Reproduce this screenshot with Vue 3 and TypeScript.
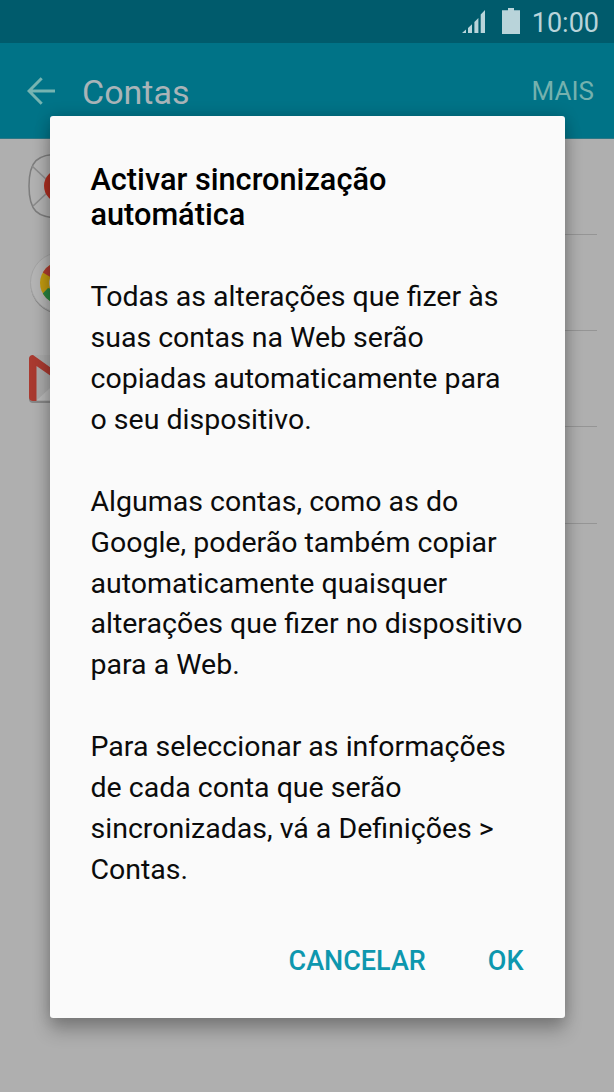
<script setup lang="ts">
const title: string[] = ['Activar sincronização', 'automática']

const paragraphs: string[][] = [
  ['Todas as alterações que fizer às', 'suas contas na Web serão', 'copiadas automaticamente para', 'o seu dispositivo.'],
  ['Algumas contas, como as do', 'Google, poderão também copiar', 'automaticamente quaisquer', 'alterações que fizer no dispositivo', 'para a Web.'],
  ['Para seleccionar as informações', 'de cada conta que serão', 'sincronizadas, vá a Definições >', 'Contas.'],
]
</script>

<template>
  <div class="screen">
    <header class="status">
      <svg class="signal" width="24" height="24" viewBox="0 0 24 24">
        <path d="M0 24 4 20.5V24ZM6 19 10 15.3V24H6ZM12.4 13 16.4 9V24h-4ZM18.7 5.5 23 1V24h-4.3Z" />
      </svg>
      <svg class="battery" width="18" height="26" viewBox="0 0 18 26">
        <path d="M6 0h6v2.3h6V26H0V2.3h6Z" />
      </svg>
      <span class="time">10:00</span>
    </header>
    <nav class="bar">
      <svg class="back" width="28" height="28" viewBox="0 0 28 28">
        <path d="M28 14H2M14.7 1.3 2 14l12.7 12.7" />
      </svg>
      <h1 class="heading">Contas</h1>
      <span class="more">MAIS</span>
    </nav>
    <main class="list">
      <div class="row">
        <svg class="icon" width="66" height="66" viewBox="0 0 66 66">
          <path d="M1 32C1 7 9 0 33 0S65 7 65 32 57 64 33 64 1 57 1 32Z" fill="#b1b1b1" stroke="#7d7d7d" stroke-width="1.5" />
          <path d="M4 12 19 26M5 52 19 39" stroke="#8b8b8b" stroke-width="1.7" />
          <circle cx="33" cy="32" r="17" fill="#ad2e20" />
        </svg>
      </div>
      <div class="row">
        <svg class="icon" width="66" height="66" viewBox="0 0 66 66">
          <circle cx="32.5" cy="34" r="30" fill="#858585" />
          <circle cx="32.5" cy="32.5" r="30" fill="#b4b4b4" stroke="#a3a3a3" />
          <circle cx="33" cy="33" r="21" fill="#c19a10" />
          <path d="M14.8 22.5A21 21 0 0 1 51.2 22.5H33L24 28Z" fill="#ae3b31" />
          <path d="M14.8 43.5A21 21 0 0 0 33 54V42L20 38Z" fill="#28833f" />
          <circle cx="33" cy="33" r="12" fill="#b9b9b9" />
        </svg>
      </div>
      <div class="row">
        <svg class="icon" width="66" height="66" viewBox="0 0 66 66">
          <rect x="1" y="10" width="64" height="47" rx="4" fill="#868686" />
          <rect x="2" y="9" width="62" height="46" rx="3" fill="#a9a9a9" />
          <path d="M9 54 33 32 57 54Z" fill="#b8b8b8" />
          <path d="M1 13Q1 9 5 9L33 29 61 9Q65 9 65 13V55H58V19L33 37 8.5 20V55H5Q1 55 1 51Z" fill="#a93a30" />
        </svg>
      </div>
      <div class="row"></div>
    </main>

    <section class="dialog" role="dialog">
      <h2 class="title"><span v-for="line in title" :key="line" class="line">{{ line }}</span></h2>
      <div class="body">
        <p v-for="(lines, i) in paragraphs" :key="i" class="para">
          <span v-for="line in lines" :key="line" class="line">{{ line }}</span>
        </p>
      </div>
      <div class="actions">
        <button class="action">CANCELAR</button>
        <button class="action">OK</button>
      </div>
    </section>
  </div>
</template>

<style>
body {
  margin: 0;
}
</style>

<style scoped>
.screen {
  position: relative;
  width: 614px;
  height: 1092px;
  overflow: hidden;
  background: #afafaf;
  font-family: Roboto, sans-serif;
}
.status {
  box-sizing: border-box;
  height: 43px;
  display: flex;
  align-items: flex-start;
  padding: 8px 15px 0 0;
  justify-content: flex-end;
  background: #005b6c;
  color: #b9d4da;
}
.status svg {
  fill: currentColor;
}
.signal {
  margin: 1px 16px 0 0;
}
.battery {
  margin-right: 12px;
}
.time {
  margin-top: 1px;
  font-size: 27px;
  line-height: 28px;
}
.bar {
  box-sizing: border-box;
  height: 95.5px;
  display: flex;
  align-items: center;
  padding: 1px 20px 0 27px;
  background: #007387;
  border-bottom: 1px solid #2c7785;
}
.back {
  fill: none;
  stroke: #76b4b1;
  stroke-width: 3;
}
.heading {
  margin: 2px 0 0 27px;
  font-size: 34px;
  font-weight: 400;
  line-height: 40px;
  color: #a9b4b8;
}
.more {
  margin: 0 0 0 auto;
  font-size: 26px;
  line-height: 30px;
  color: #75b1ae;
}
.list {
  padding: 0 17px 0 120px;
}
.row {
  box-sizing: border-box;
  height: 96.3px;
  padding-top: 15px;
  border-bottom: 1px solid #959595;
}
.icon {
  display: block;
  margin-left: -92px;
  overflow: visible;
}
.dialog {
  position: absolute;
  left: 49.5px;
  top: 116px;
  box-sizing: border-box;
  width: 515px;
  height: 902px;
  padding: 46px 41px 0;
  background: #fafafa;
  border-radius: 3px;
  box-shadow: 0 13px 18px rgba(0, 0, 0, 0.24), 0 0 15px rgba(0, 0, 0, 0.2);
  color: #0b0b0b;
}
.line {
  display: block;
  white-space: nowrap;
}
.title {
  margin: 0;
  font-size: 30.7px;
  font-weight: 500;
  line-height: 35px;
  color: #000;
}
.body {
  margin-top: 45px;
  display: flex;
  flex-direction: column;
  gap: 40.93px;
  font-size: 28.5px;
  line-height: 40.93px;
}
.para {
  margin: 0;
}
.actions {
  display: flex;
  justify-content: flex-end;
  gap: 62px;
  margin-top: 52px;
}
.action {
  padding: 0;
  border: 0;
  background: none;
  font: 500 27px/36px Roboto, sans-serif;
  color: #0d97ae;
}
</style>
